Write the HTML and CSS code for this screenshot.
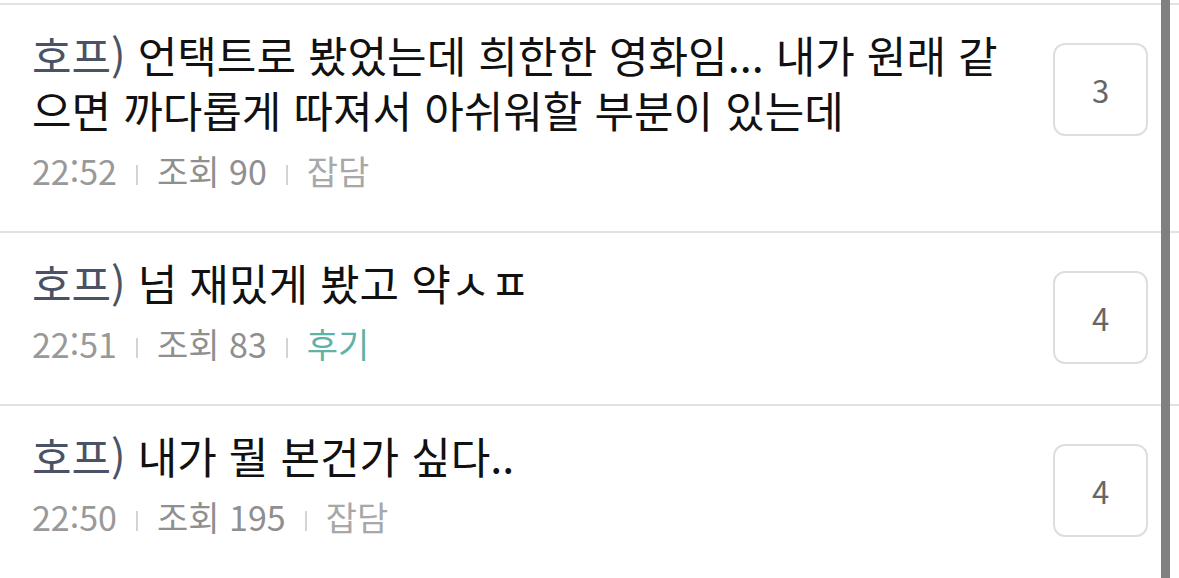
FILE: index.html
```html
<!DOCTYPE html>
<html lang="ko">
<head>
    <meta charset="UTF-8">
    <title>게시판</title>
    <link rel="stylesheet" href="styles.css">
</head>
<body>
    <ul class="post-list">
        <li class="post">
            <div class="post-body">
                <a class="post-title" href="#"><span class="head">호프)</span> 언택트로 봤었는데 희한한 영화임... 내가 원래 같으면 까다롭게 따져서 아쉬워할 부분이 있는데</a>
                <div class="post-meta">
                    <span class="time">22:52</span><span class="sep"></span><span class="views">조회 90</span><span class="sep"></span><span class="cat">잡담</span>
                </div>
            </div>
            <a class="reply-count" href="#">3</a>
        </li>
        <li class="post">
            <div class="post-body">
                <a class="post-title" href="#"><span class="head">호프)</span> 넘 재밌게 봤고 약ㅅㅍ</a>
                <div class="post-meta">
                    <span class="time">22:51</span><span class="sep"></span><span class="views">조회 83</span><span class="sep"></span><span class="cat review">후기</span>
                </div>
            </div>
            <a class="reply-count" href="#">4</a>
        </li>
        <li class="post">
            <div class="post-body">
                <a class="post-title" href="#"><span class="head">호프)</span> 내가 뭘 본건가 싶다..</a>
                <div class="post-meta">
                    <span class="time">22:50</span><span class="sep"></span><span class="views">조회 195</span><span class="sep"></span><span class="cat">잡담</span>
                </div>
            </div>
            <a class="reply-count" href="#">4</a>
        </li>
    </ul>
    <div class="scroll-thumb"></div>
</body>
</html>
```

FILE: styles.css
```css
body {
    margin: 0;
    background: #fff;
    font-family: "Noto Sans CJK KR", "Noto Sans", sans-serif;
    overflow: hidden;
}

a {
    color: inherit;
    text-decoration: none;
}

.post-list {
    list-style: none;
    margin: 3px 0 0;
    padding: 0;
}

.post {
    display: flex;
    align-items: flex-start;
    border-top: 2px solid #e2e2e2;
    padding: 22px 31px 40px 32px;
}

.post-body {
    flex: 1;
    margin-right: 40px;
}

.post-title {
    display: block;
    font-size: 43px;
    line-height: 55px;
    color: #111;
}

.head {
    color: #4a5366;
}

.post-meta {
    margin-top: 14px;
    font-size: 34px;
    line-height: 40px;
    color: #999;
}

.views {
    color: #8f8f8f;
}

.cat {
    color: #a8a8a8;
}

.cat.review {
    color: #5fb2a6;
}

.sep {
    display: inline-block;
    width: 2px;
    height: 20px;
    margin: 0 19px;
    background: #d4d4d4;
}

.reply-count {
    flex: none;
    display: flex;
    align-items: center;
    justify-content: center;
    width: 91px;
    height: 89px;
    margin-top: 16px;
    border: 2px solid #dedede;
    border-radius: 12px;
    font-size: 31px;
    color: #666;
}

/* overlay scrollbar on the right edge */
.scroll-thumb {
    position: fixed;
    top: 0;
    bottom: 0;
    left: 1161px;
    width: 9px;
    background: #808080;
}
```
